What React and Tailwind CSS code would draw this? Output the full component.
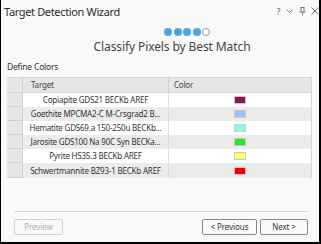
export default function App() {
  const rows = [
    ["Copiapite GDS21 BECKb AREF", "#8c1657"],
    ["Goethite MPCMA2-C M-Crsgrad2 B...", "#99c1f7"],
    ["Hematite GDS69.a 150-250u BECKb...", "#80ffe3"],
    ["Jarosite GDS100 Na 90C Syn BECKa...", "#26e626"],
    ["Pyrite HS35.3 BECKb AREF", "#ffff66"],
    ["Schwertmannite BZ93-1 BECKb AREF", "#f00000"],
  ];
  return (
    <div
      className="w-[321px] h-[244px] bg-[#f9f9f9] border-l border-r-2 border-b-2 border-black flex flex-col text-[#333]"
      style={{ fontFamily: '"Noto Sans", "Open Sans", sans-serif' }}
    >
      <div className="flex items-center justify-between pl-[3px] pr-0 h-[22px]">
        <span className="text-[11px] leading-none tracking-[-0.35px] text-[#2b2b2b]">Target Detection Wizard</span>
        <div className="flex items-center gap-[5.5px] text-[#666]">
          <span className="text-[9px] leading-none">?</span>
          <svg width="7" height="5" viewBox="0 0 7 5"><path d="M0.5 0.5 L3.5 3.5 L6.5 0.5" fill="none" stroke="#777" strokeWidth="1" /></svg>
          <svg width="7" height="9" viewBox="0 0 7 9"><path d="M1.5 0.5 H5.5 M2 0.5 V5 M5 0.5 V5 M0.5 5 H6.5 M3.5 5 V8.5" fill="none" stroke="#777" strokeWidth="1" /></svg>
          <svg width="8" height="8" viewBox="0 0 8 8"><path d="M0.5 0.5 L7.5 7.5 M7.5 0.5 L0.5 7.5" fill="none" stroke="#777" strokeWidth="1" /></svg>
        </div>
      </div>
      <div className="flex justify-center gap-[1.5px] mt-[6px] pl-[54px]">
        {[0, 1, 2, 3].map((i) => (
          <div key={i} className="w-[8px] h-[8px] rounded-full bg-[#4aa6e3]" />
        ))}
        <div className="w-[8px] h-[8px] rounded-full border border-[#999] bg-white" />
      </div>
      <div className="text-center text-[12px] tracking-[-0.1px] leading-none mt-[5px] text-[#444] pl-[24px]">Classify Pixels by Best Match</div>
      <div className="text-[8.5px] tracking-[-0.2px] leading-none mt-[10px] ml-[6px] text-[#333]">Define Colors</div>
      <div className="ml-[6px] mr-[7px] mt-[5px] border-r border-[#d4d4d4] flex flex-col text-[8px] tracking-[-0.2px] leading-none">
        <div className="flex h-[16px] bg-[#e6e6e6] border-y border-[#d6d6d6]">
          <div className="w-[16px] border-r border-[#d0d0d0]" />
          <div className="w-[146px] border-r border-[#d0d0d0] flex items-center pl-[8px] text-[#444]">Target</div>
          <div className="flex-1 flex items-center pl-[5px] text-[#444]">Color</div>
        </div>
        {rows.map(([name, color], i) => (
          <div key={name} className={`flex h-[14.2px] ${i % 2 === 0 ? "bg-white" : "bg-[#ebebeb]"}`}>
            <div className="w-[16px] bg-[#e6e6e6] border-r border-b border-[#d0d0d0]" />
            <div className="w-[146px] border-r border-[#dcdcdc] flex items-center justify-center text-[#333] whitespace-nowrap overflow-hidden">{name}</div>
            <div className="flex-1 flex items-center justify-center pr-[1px]">
              <div className="w-[12px] h-[8px] border border-[#c8c8c8]" style={{ backgroundColor: color }} />
            </div>
          </div>
        ))}
      </div>
      <div className="flex-1" />
      <div className="ml-[13px] mr-[11px] h-px bg-[#d8d8d8]" />
      <div className="flex items-center justify-between ml-[13px] mr-[11px] mt-[7px] mb-[7px] text-[8px] tracking-[-0.1px]">
        <button className="w-[49px] h-[16px] border border-[#d0d0d0] rounded-[2px] text-[#b0b0b0] bg-[#f9f9f9]">Preview</button>
        <div className="flex gap-[3px]">
          <button className="w-[55px] h-[16px] border border-[#888] rounded-[2px] text-[#333] bg-[#fafafa]">&lt; Previous</button>
          <button className="w-[48px] h-[16px] border border-[#888] rounded-[2px] text-[#333] bg-[#fafafa]">Next &gt;</button>
        </div>
      </div>
    </div>
  );
}
